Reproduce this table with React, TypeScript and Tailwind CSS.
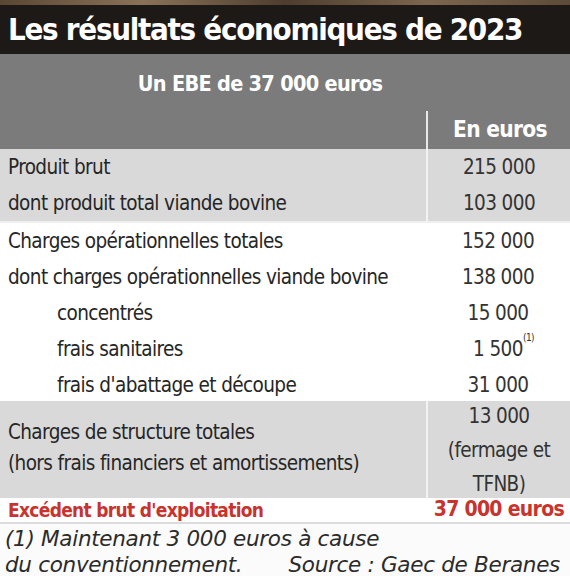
const ROWS_GRAY = [
  { label: 'Produit brut', value: '215 000' },
  { label: 'dont produit total viande bovine', value: '103 000' },
]

const ROWS_WHITE = [
  { label: 'Charges opérationnelles totales', value: '152 000', indent: false },
  { label: 'dont charges opérationnelles viande bovine', value: '138 000', indent: false },
  { label: 'concentrés', value: '15 000', indent: true },
  { label: 'frais sanitaires', value: '1 500', note: '(1)', indent: true },
  { label: "frais d'abattage et découpe", value: '31 000', indent: true },
]

const font = "font-['DejaVu_Sans_Condensed','Liberation_Sans',sans-serif]"

export default function App() {
  return (
    <div className={`w-[570px] h-[576px] overflow-hidden bg-white ${font}`}>
      <div className="h-[5px] bg-[linear-gradient(90deg,#5a4634,#8a7258,#4e3d2e,#7c664f,#5d4a38)]" />
      <div className="h-[49px] bg-[#1d1917] flex items-center pl-[8px]">
        <h1 className="text-white font-bold text-[31px] tracking-[-1.3px] leading-none">
          Les résultats économiques de 2023
        </h1>
      </div>

      <div className="bg-[#7b7b7b]">
        <div className="h-[57px] flex items-center justify-center pt-[4px] pr-[50px]">
          <span className="text-white font-bold text-[21.5px] tracking-[-0.7px]">Un EBE de 37 000 euros</span>
        </div>
        <div className="flex h-[38px]">
          <div className="w-[426px]" />
          <div className="flex-1 border-l-2 border-[#e8e8e8] flex items-center justify-center pl-[2px]">
            <span className="text-white font-bold text-[22.5px] tracking-[-0.7px]">En euros</span>
          </div>
        </div>
      </div>

      <div className="bg-[#d9d9d9] border-b-2 border-[#f0f0f0]">
        {ROWS_GRAY.map((r) => (
          <div key={r.label} className="flex h-[36px]">
            <div className="w-[426px] flex items-center pl-[8px] text-[#262626] text-[20.5px] tracking-[-0.6px]">{r.label}</div>
            <div className="flex-1 border-l-2 border-[#f2f2f2] flex items-center justify-center text-[#333] text-[20.5px] tracking-[-0.6px]">
              {r.value}
            </div>
          </div>
        ))}
      </div>

      <div className="bg-white h-[178px]">
        {ROWS_WHITE.map((r) => (
          <div key={r.label} className="flex h-[36px]">
            <div
              className={`w-[426px] flex items-center text-[#262626] text-[20.5px] tracking-[-0.6px] ${r.indent ? 'pl-[57px]' : 'pl-[8px]'}`}
            >
              {r.label}
            </div>
            <div className="flex-1 flex items-center justify-center text-[#333] text-[20.5px] tracking-[-0.6px]">
              <span className="relative">
                {r.value}
                {r.note && <sup className="absolute left-full top-[4px] text-[10px] tracking-[-0.5px]">{r.note}</sup>}
              </span>
            </div>
          </div>
        ))}
      </div>

      <div className="bg-[#d9d9d9] flex h-[97px]">
        <div className="w-[426px] flex flex-col justify-center pl-[8px] text-[#262626] text-[20.5px] tracking-[-0.6px] leading-[31px] pb-[3px]">
          <div>Charges de structure totales</div>
          <div>(hors frais financiers et amortissements)</div>
        </div>
        <div className="flex-1 border-l-2 border-[#f2f2f2] flex flex-col items-center justify-center text-[#333] text-[20.5px] tracking-[-0.6px] leading-[34px]">
          <div>13 000</div>
          <div>(fermage et</div>
          <div>TFNB)</div>
        </div>
      </div>

      <div className="flex h-[26px] border-b-2 border-[#dcdcdc]">
        <div className="w-[426px] flex items-center pl-[8px] text-[#c9332d] font-bold text-[19px] tracking-[-0.7px]">
          Excédent brut d'exploitation
        </div>
        <div className="flex-1 flex items-center justify-end pr-[6px] text-[#c9332d] font-bold text-[21px] tracking-[-0.7px]">
          37 000 euros
        </div>
      </div>

      <div className="bg-[#fbfbfb] pl-[5px] pr-[10px] pt-[2px] italic text-[#2b2b2b] text-[21.5px] leading-[26px] tracking-[-0.3px] font-['DejaVu_Sans',sans-serif]">
        <div>(1) Maintenant 3 000 euros à cause</div>
        <div className="flex justify-between">
          <span>du conventionnement.</span>
          <span>Source : Gaec de Beranes</span>
        </div>
      </div>
    </div>
  )
}
